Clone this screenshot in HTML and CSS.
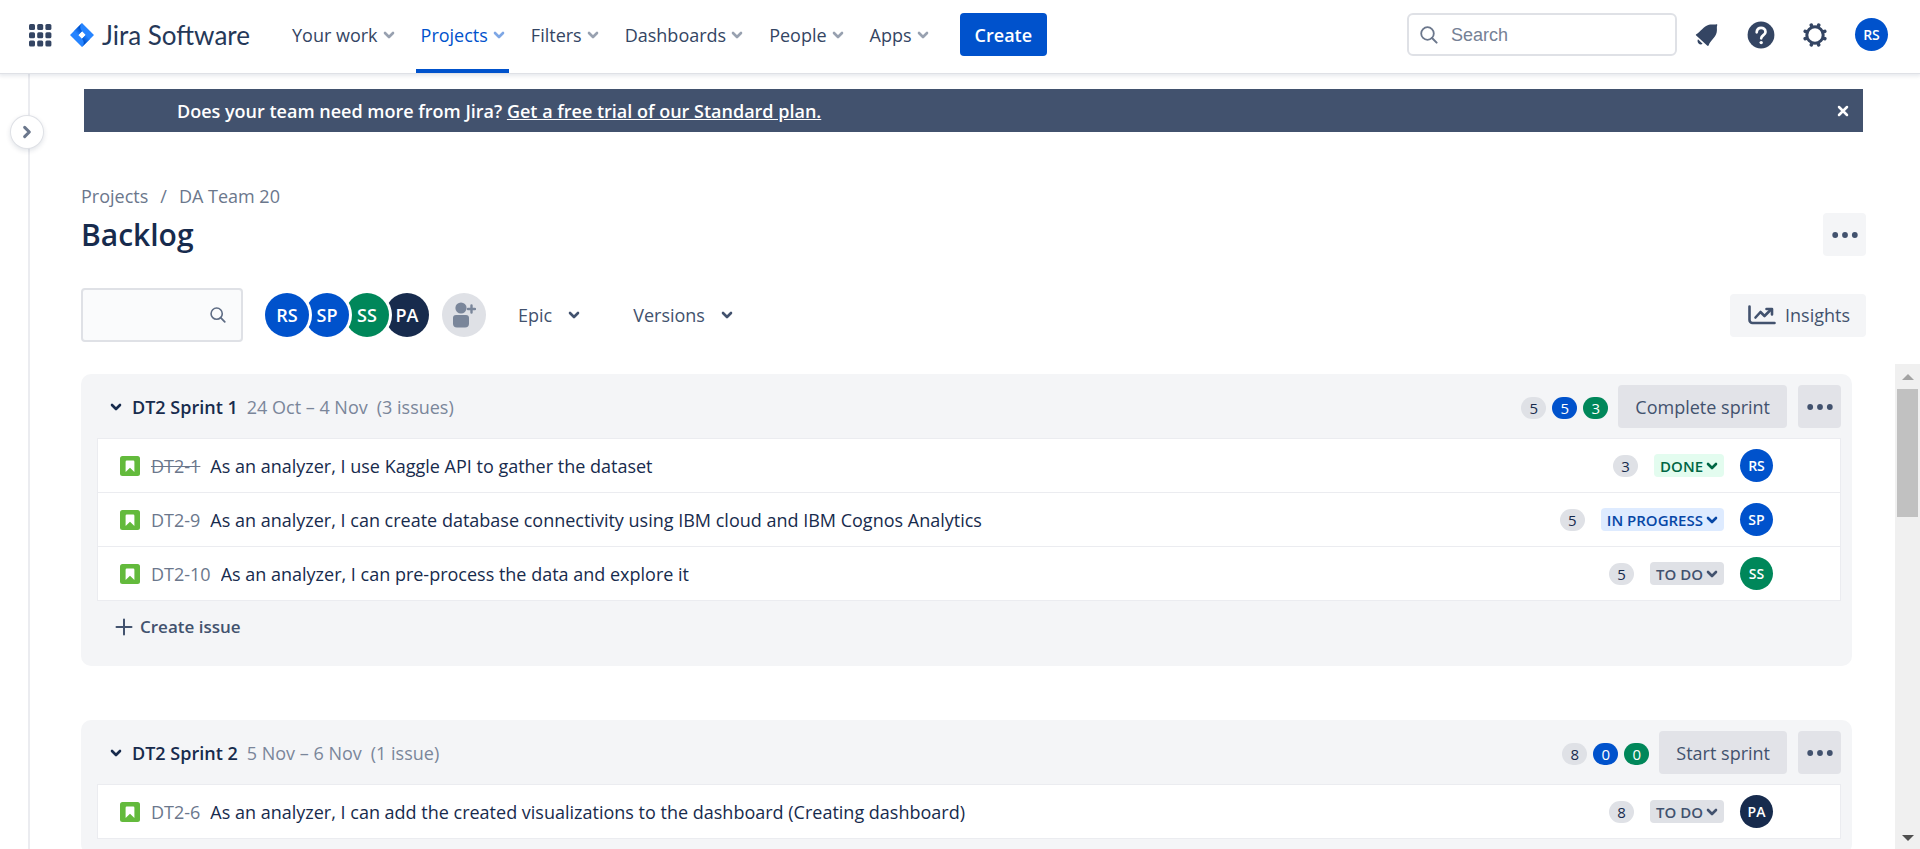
FILE: index.html
```html
<!DOCTYPE html>
<html lang="en">
<head>
<meta charset="utf-8">
<title>Backlog - Jira Software</title>
<link rel="stylesheet" href="styles.css">
</head>
<body>
<svg class="sprite" aria-hidden="true">
  <symbol id="chev" viewBox="0 0 12 12"><path d="M2 4l4 4 4-4" fill="none" stroke="currentColor" stroke-width="2.6" stroke-linecap="round" stroke-linejoin="round"/></symbol>
  <symbol id="dots" viewBox="0 0 26 6"><circle cx="3.2" cy="3" r="2.9" fill="currentColor"/><circle cx="13" cy="3" r="2.9" fill="currentColor"/><circle cx="22.8" cy="3" r="2.9" fill="currentColor"/></symbol>
  <symbol id="lens" viewBox="0 0 18 18"><circle cx="7.5" cy="7.5" r="6.3" fill="none" stroke="currentColor" stroke-width="1.8"/><path d="M12 12l4.6 4.6" stroke="currentColor" stroke-width="2" stroke-linecap="round"/></symbol>
  <symbol id="story" viewBox="0 0 20 20"><rect width="20" height="20" rx="2.5" fill="#63ba3c"/><path d="M6.8 4.6h6.4a1.2 1.2 0 0 1 1.2 1.2V16L10 11.8 5.6 16V5.800a1.200 1.200 0 0 1 1.200-1.200z" fill="#fff"/></symbol>
</svg>

<header class="topbar">
  <button class="icon-btn switcher" aria-label="Switch to">
    <svg width="24" height="24" viewBox="0 0 24 24" fill="currentColor"><rect x="1" y="1" width="6" height="6" rx="1.500"/><rect x="9.200" y="1" width="6" height="6" rx="1.500"/><rect x="17.400" y="1" width="6" height="6" rx="1.500"/><rect x="1" y="9.200" width="6" height="6" rx="1.500"/><rect x="9.200" y="9.200" width="6" height="6" rx="1.500"/><rect x="17.400" y="9.200" width="6" height="6" rx="1.500"/><rect x="1" y="17.400" width="6" height="6" rx="1.500"/><rect x="9.200" y="17.400" width="6" height="6" rx="1.500"/><rect x="17.400" y="17.400" width="6" height="6" rx="1.500"/></svg>
  </button>
  <a class="brand" href="#">
    <svg width="24" height="24" viewBox="0 0 24 24">
      <defs>
        <linearGradient id="g1" x1="11" y1="5" x2="6" y2="10" gradientUnits="userSpaceOnUse"><stop offset="0.100" stop-color="#0052cc"/><stop offset="1" stop-color="#2684ff"/></linearGradient>
        <linearGradient id="g2" x1="13" y1="19" x2="18" y2="14" gradientUnits="userSpaceOnUse"><stop offset="0.100" stop-color="#0052cc"/><stop offset="1" stop-color="#2684ff"/></linearGradient>
      </defs>
      <path d="M12 0l12 12-12 12L0 12zM12 8.300L8.300 12l3.700 3.700 3.700-3.700z" fill="#2684ff" fill-rule="evenodd"/>
      <path d="M12 8.300C9.600 5.900 9.600 2.500 12 0L3.800 8.200l4.500 3.800z" fill="url(#g1)"/>
      <path d="M12 15.700c2.400 2.400 2.400 5.800 0 8.300l8.200-8.200-4.500-3.800z" fill="url(#g2)"/>
    </svg>
    <span>Jira Software</span>
  </a>
  <nav class="menu">
    <button>Your work <svg class="chev"><use href="#chev"/></svg></button>
    <button class="active">Projects <svg class="chev"><use href="#chev"/></svg></button>
    <button>Filters <svg class="chev"><use href="#chev"/></svg></button>
    <button>Dashboards <svg class="chev"><use href="#chev"/></svg></button>
    <button>People <svg class="chev"><use href="#chev"/></svg></button>
    <button>Apps <svg class="chev"><use href="#chev"/></svg></button>
  </nav>
  <button class="create">Create</button>
  <label class="search">
    <svg width="18" height="18"><use href="#lens"/></svg>
    <input type="search" placeholder="Search" aria-label="Search">
  </label>
  <div class="tools">
    <button class="icon-btn" aria-label="Notifications">
      <svg width="24" height="24" viewBox="0 0 24 24" fill="currentColor"><path d="M1.300 11.200C5.500 8.800 8.500 3.200 14 1.700c3-.800 5.500.300 7.300-.400.700-.2 1.200.400.900 1-.8 1.700.2 3.900-.5 7-1.200 5.400-6.400 8.600-8 12.900-.3.800-1 .9-1.600.3L1.200 12.600c-.5-.5-.5-1.100.1-1.400z"/><path d="M3 16.200l4.600 4.600c-1.300 1-3 .8-4-.300-1.100-1.200-1.400-2.900-.600-4.300z"/></svg>
    </button>
    <button class="icon-btn" aria-label="Help">
      <svg width="28" height="28" viewBox="0 0 28 28"><circle cx="14" cy="14" r="13.400" fill="currentColor"/><path d="M9.700 11.300c0-6.200 8.800-5.700 8.800-.400 0 3.200-4.300 3.100-4.300 6.400" fill="none" stroke="#fff" stroke-width="2.700" stroke-linecap="round"/><circle cx="14.200" cy="21.600" r="1.700" fill="#fff"/></svg>
    </button>
    <button class="icon-btn" aria-label="Settings">
      <svg width="24" height="24" viewBox="0 0 24 24" stroke="currentColor"><circle cx="12" cy="12" r="8.200" fill="none" stroke-width="3"/><path d="M8.300 2.200l.4 1M15.700 2.200l-.4 1M8.300 21.800l.4-1M15.700 21.800l-.4-1M2.200 8.300l1 .4M2.200 15.700l1-.4M21.800 8.300l-1 .4M21.800 15.700l-1-.4" stroke-width="3.600" stroke-linecap="round"/></svg>
    </button>
    <button class="avatar small blue" aria-label="Your profile">RS</button>
  </div>
</header>

<div class="body">
  <aside class="rail">
    <button class="expand" aria-label="Expand sidebar"><svg class="chev right"><use href="#chev"/></svg></button>
  </aside>
  <main class="main">
    <div class="banner">
      <p>Does your team need more from Jira? <a href="#">Get a free trial of our Standard plan.</a></p>
      <button class="icon-btn" aria-label="Dismiss"><svg width="12" height="12" viewBox="0 0 12 12"><path d="M2 2l8 8M10 2l-8 8" stroke="#fff" stroke-width="2.500" stroke-linecap="round"/></svg></button>
    </div>
    <nav class="crumbs"><a href="#">Projects</a><span>/</span><a href="#">DA Team 20</a></nav>
    <div class="title-row">
      <h1>Backlog</h1>
      <button class="more light" aria-label="More actions"><svg class="dots"><use href="#dots"/></svg></button>
    </div>
    <div class="filters">
      <label class="find"><input type="text" aria-label="Search backlog"><svg width="16" height="16"><use href="#lens"/></svg></label>
      <div class="people">
        <button class="avatar blue">RS</button><button class="avatar blue">SP</button><button class="avatar green">SS</button><button class="avatar navy">PA</button>
      </div>
      <button class="add" aria-label="Add people">
        <svg width="24" height="26" viewBox="0 0 24 26" fill="currentColor"><circle cx="9" cy="6" r="5.600"/><path d="M1 16a3 3 0 0 1 3-3h10a3 3 0 0 1 3 3v5.500a4 4 0 0 1-4 4H5a4 4 0 0 1-4-4z"/><path d="M19.500 3.500v7M16 7h7" stroke="currentColor" stroke-width="2.400" stroke-linecap="round"/></svg>
      </button>
      <button class="drop">Epic <svg class="chev"><use href="#chev"/></svg></button>
      <button class="drop">Versions <svg class="chev"><use href="#chev"/></svg></button>
      <button class="insights"><svg width="28" height="20" viewBox="0 0 28 20" fill="none" stroke="currentColor" stroke-width="2.600" stroke-linecap="round" stroke-linejoin="round"><path d="M1.500 1.500v13.500a3 3 0 0 0 3 3h22"/><path d="M7.500 12.500l5-5.500 4 4 6.500-6.500"/><path d="M18.500 4h5.500v5.500"/></svg>Insights</button>
    </div>

    <div class="scroller">
      <div class="sprints">
        <section class="sprint">
          <div class="sprint-head">
            <button class="toggle"><svg class="chev"><use href="#chev"/></svg><b>DT2 Sprint 1</b></button>
            <span class="muted">24 Oct – 4 Nov</span><span class="muted">(3 issues)</span>
            <div class="actions">
              <span class="pill">5</span><span class="pill blue">5</span><span class="pill green">3</span>
              <button class="action">Complete sprint</button>
              <button class="more" aria-label="Sprint actions"><svg class="dots"><use href="#dots"/></svg></button>
            </div>
          </div>
          <ul class="issues">
            <li><svg class="story"><use href="#story"/></svg><a class="key done-key" href="#">DT2-1</a><span class="summary">As an analyzer, I use Kaggle API to gather the dataset</span><span class="pill">3</span><button class="status done">DONE <svg class="chev"><use href="#chev"/></svg></button><button class="avatar small blue">RS</button></li>
            <li><svg class="story"><use href="#story"/></svg><a class="key" href="#">DT2-9</a><span class="summary">As an analyzer, I can create database connectivity using IBM cloud and IBM Cognos Analytics</span><span class="pill">5</span><button class="status progress">IN PROGRESS <svg class="chev"><use href="#chev"/></svg></button><button class="avatar small blue">SP</button></li>
            <li><svg class="story"><use href="#story"/></svg><a class="key" href="#">DT2-10</a><span class="summary">As an analyzer, I can pre-process the data and explore it</span><span class="pill">5</span><button class="status">TO DO <svg class="chev"><use href="#chev"/></svg></button><button class="avatar small green">SS</button></li>
          </ul>
          <button class="create-issue"><svg width="18" height="18" viewBox="0 0 18 18"><path d="M9 1.500v15M1.500 9h15" stroke="currentColor" stroke-width="2" stroke-linecap="round"/></svg>Create issue</button>
        </section>

        <section class="sprint">
          <div class="sprint-head">
            <button class="toggle"><svg class="chev"><use href="#chev"/></svg><b>DT2 Sprint 2</b></button>
            <span class="muted">5 Nov – 6 Nov</span><span class="muted">(1 issue)</span>
            <div class="actions">
              <span class="pill">8</span><span class="pill blue">0</span><span class="pill green">0</span>
              <button class="action">Start sprint</button>
              <button class="more" aria-label="Sprint actions"><svg class="dots"><use href="#dots"/></svg></button>
            </div>
          </div>
          <ul class="issues">
            <li><svg class="story"><use href="#story"/></svg><a class="key" href="#">DT2-6</a><span class="summary">As an analyzer, I can add the created visualizations to the dashboard (Creating dashboard)</span><span class="pill">8</span><button class="status">TO DO <svg class="chev"><use href="#chev"/></svg></button><button class="avatar small navy">PA</button></li>
          </ul>
        </section>
      </div>
      <div class="scrollbar" aria-hidden="true">
        <svg width="12" height="6" viewBox="0 0 12 6"><path d="M6 0l6 6H0z" fill="#a3a3a3"/></svg>
        <div class="thumb"></div>
        <svg class="down" width="12" height="6" viewBox="0 0 12 6"><path d="M0 0h12L6 6z" fill="#505050"/></svg>
      </div>
    </div>
  </main>
</div>
</body>
</html>
```
FILE: styles.css
```css
* { box-sizing: border-box; }
body {
  margin: 0;
  height: 100vh;
  display: flex;
  flex-direction: column;
  overflow: hidden;
  background: #fff;
  color: #172b4d;
  font: 400 18px/24px "Segoe UI", "Open Sans", "Noto Sans", sans-serif;
}
button, input { font: inherit; color: inherit; }
button { border: 0; padding: 0; background: none; white-space: nowrap; cursor: pointer; }
a { color: inherit; text-decoration: none; }
svg { flex: none; display: block; }
.sprite { position: absolute; width: 0; height: 0; }
.chev { width: 12px; height: 12px; }
.dots { width: 26px; height: 6px; }
.icon-btn { display: grid; place-items: center; }

/* Top navigation */
.topbar {
  position: relative;
  z-index: 2;
  flex: none;
  display: flex;
  align-items: center;
  height: 73px;
  padding: 0 32px 4px 28px;
  background: #fff;
  color: #344563;
  box-shadow: 0 1px 0 #dfe1e6, 0 2px 4px 1px rgba(9, 30, 66, 0.1);
}
.brand {
  display: flex;
  align-items: center;
  gap: 8px;
  width: 217px;
  margin-left: 18px;
  color: #253858;
  font: 400 26px/32px Lato, sans-serif;
  white-space: nowrap;
}
.menu { display: flex; align-self: stretch; gap: 17px; margin-bottom: -4px; }
.menu button {
  display: flex;
  align-items: center;
  gap: 5px;
  padding: 0 4px 2px 5px;
  font-weight: 500;
  border-bottom: 4px solid transparent;
  border-top: 2px solid transparent;
}
.menu .active { color: #0052cc; border-bottom-color: #0052cc; }
.menu .chev { opacity: 0.5; }
.create {
  height: 43px;
  margin-left: 27px;
  padding: 0 15px;
  border-radius: 4px;
  background: #0052cc;
  color: #fff;
  font-weight: 600;
}
.search {
  display: flex;
  align-items: center;
  gap: 13px;
  width: 270px;
  height: 43px;
  margin-left: auto;
  padding: 0 11px;
  border: 2px solid #dfe1e6;
  border-radius: 6px;
  color: #6b778c;
}
.search input, .find input { flex: 1; min-width: 0; border: 0; padding: 0; outline: 0; background: none; }
.search input { font: 18px/24px "Liberation Sans", Arial, sans-serif; }
.search input::placeholder { color: #758195; }
.tools { display: flex; align-items: center; gap: 28px; margin-left: 18px; }

.avatar {
  width: 44px;
  height: 44px;
  border-radius: 50%;
  color: #fff;
  font-size: 18px;
  font-weight: 600;
  background: #dfe1e6;
}
.avatar.small { width: 33px; height: 33px; font-size: 14px; line-height: 20px; }
.blue { background: #0052cc; }
.green { background: #00875a; }
.navy { background: #172b4d; }

/* Page frame */
.body { flex: 1; min-height: 0; display: flex; }
.rail {
  position: relative;
  z-index: 1;
  flex: none;
  width: 30px;
  border-right: 2px solid #ebecf0;
}
.expand {
  position: absolute;
  top: 43px;
  right: -15px;
  display: grid;
  place-items: center;
  width: 32px;
  height: 32px;
  border-radius: 50%;
  background: #fff;
  color: #6b778c;
  box-shadow: 0 0 0 1px #dfe1e6, 0 2px 5px 1px rgba(9, 30, 66, 0.12);
}
.right { transform: rotate(-90deg); width: 14px; height: 14px; }
.main { flex: 1; min-width: 0; display: flex; flex-direction: column; padding: 16px 0 0 51px; }

.banner {
  display: flex;
  align-items: center;
  justify-content: space-between;
  height: 43px;
  margin: 0 57px 0 3px;
  padding: 0 14px 0 93px;
  background: #42526e;
  color: #fff;
  font-weight: 600;
}
.banner p { margin: 0; }
.banner a { text-decoration: underline; }
.crumbs { display: flex; gap: 12px; margin-top: 52px; color: #6b778c; }
.title-row { display: flex; align-items: center; justify-content: space-between; margin: 5px 54px 0 0; }
h1 { margin: 0; font-size: 30px; line-height: 40px; font-weight: 600; }
.more {
  display: grid;
  place-items: center;
  width: 43px;
  height: 43px;
  border-radius: 4px;
  background: #e2e3e8;
  color: #42526e;
}
.more.light { background: #f4f5f7; }

.filters { display: flex; align-items: center; margin: 32px 54px 0 0; color: #42526e; font-weight: 500; }
.find {
  display: flex;
  align-items: center;
  width: 162px;
  height: 54px;
  padding: 0 15px;
  border: 2px solid #dfe1e6;
  border-radius: 4px;
  background: #fafbfc;
  color: #5e6c84;
}
.people { display: flex; margin-left: 22px; }
.people .avatar { position: relative; margin-right: -4px; box-shadow: 0 0 0 3px #fff; }
.people .avatar:nth-child(1) { z-index: 4; }
.people .avatar:nth-child(2) { z-index: 3; }
.people .avatar:nth-child(3) { z-index: 2; }
.add {
  display: grid;
  place-items: center;
  width: 44px;
  height: 44px;
  margin: 0 32px 0 17px;
  border-radius: 50%;
  background: #dfe1e6;
  color: #7a869a;
}
.drop { display: flex; align-items: center; gap: 16px; margin-right: 53px; }
.insights {
  display: flex;
  align-items: center;
  gap: 9px;
  height: 43px;
  margin-left: auto;
  padding: 0 16px 0 18px;
  border-radius: 4px;
  background: #f4f5f7;
}

/* Sprint list */
.scroller { flex: 1; min-height: 0; display: flex; margin-top: 22px; }
.sprints { flex: 1; min-width: 0; overflow: hidden; padding: 10px 43px 0 0; }
.sprint { margin-bottom: 54px; padding: 11px 11px 15px 16px; border-radius: 10px; background: #f4f5f7; }
.sprint-head { display: flex; align-items: center; gap: 9px; height: 43px; }
.toggle { display: flex; align-items: center; gap: 10px; padding-left: 13px; }
.toggle b { font-weight: 600; }
.muted { color: #7a869a; }
.actions { display: flex; align-items: center; gap: 6px; margin-left: auto; }
.action {
  height: 43px;
  margin: 0 5px 0 4px;
  padding: 0 17px;
  border-radius: 4px;
  background: #e2e3e8;
  color: #42526e;
  font-weight: 500;
}
.pill {
  min-width: 25px;
  height: 22px;
  border-radius: 11px;
  font-size: 15px;
  line-height: 22px;
  text-align: center;
  background: #dfe1e6;
}
.actions .pill { margin-top: 2px; }
.pill.blue { background: #0052cc; color: #fff; }
.pill.green { background: #00875a; color: #fff; }
.issues { margin: 10px 0 0; padding: 0; list-style: none; border: 1px solid #ebecf0; border-top: 0; background: #fff; }
.issues li { display: flex; align-items: center; height: 54px; padding: 0 67px 0 22px; border-top: 1px solid #ebecf0; }
.story { width: 20px; height: 20px; margin-right: 11px; }
.key { color: #6b778c; }
.done-key { text-decoration: line-through; }
.summary { flex: 1; margin-left: 10px; white-space: nowrap; overflow: hidden; text-overflow: ellipsis; }
.status {
  display: flex;
  align-items: center;
  gap: 3px;
  height: 23px;
  margin: 0 16px;
  padding: 0 6px;
  border-radius: 4px;
  background: #dfe1e6;
  color: #42526e;
  font-size: 15px;
  line-height: 20px;
  font-weight: 600;
}
.done { background: #e3fcef; color: #006644; }
.progress { background: #deebff; color: #0747a6; }
.create-issue { display: flex; align-items: center; gap: 7px; height: 48px; padding-left: 18px; margin: 2px 0 0; color: #42526e; font-size: 17px; font-weight: 600; }

.scrollbar {
  flex: none;
  display: flex;
  flex-direction: column;
  align-items: center;
  width: 25px;
  padding: 10px 2px 8px;
  background: #f0f0f0;
}
.thumb { align-self: stretch; height: 128px; margin-top: 9px; background: #c1c1c1; }
.down { margin-top: auto; }
```
